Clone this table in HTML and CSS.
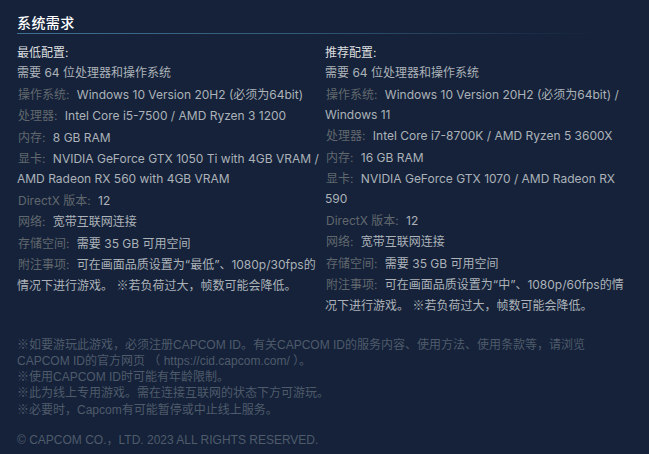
FILE: index.html
```html
<!DOCTYPE html>
<html lang="zh-CN">
<head>
<meta charset="utf-8">
<title>系统需求</title>
<link rel="stylesheet" href="styles.css">
</head>
<body>
<div class="page">
  <h2 class="title">系统需求</h2>
  <div class="cols">
    <ul class="col">
      <li class="head">最低配置:</li>
      <li>需要 64 位处理器和操作系统</li>
      <li><span class="lbl">操作系统:</span> Windows 10 Version 20H2 (必须为64bit)</li>
      <li><span class="lbl">处理器:</span> Intel Core i5-7500 / AMD Ryzen 3 1200</li>
      <li><span class="lbl">内存:</span> 8 GB RAM</li>
      <li><span class="lbl">显卡:</span> NVIDIA GeForce GTX 1050 Ti with 4GB VRAM / AMD Radeon RX 560 with 4GB VRAM</li>
      <li><span class="lbl">DirectX 版本:</span> 12</li>
      <li><span class="lbl">网络:</span> 宽带互联网连接</li>
      <li><span class="lbl">存储空间:</span> 需要 35 GB 可用空间</li>
      <li><span class="lbl">附注事项:</span> 可在画面品质设置为“最低”、1080p/30fps的情况下进行游戏。 <span class="cjk">※</span>若负荷过大，帧数可能会降低。</li>
    </ul>
    <ul class="col">
      <li class="head">推荐配置:</li>
      <li>需要 64 位处理器和操作系统</li>
      <li><span class="lbl">操作系统:</span> Windows 10 Version 20H2 (必须为64bit) / Windows 11</li>
      <li><span class="lbl">处理器:</span> Intel Core i7-8700K / AMD Ryzen 5 3600X</li>
      <li><span class="lbl">内存:</span> 16 GB RAM</li>
      <li><span class="lbl">显卡:</span> NVIDIA GeForce GTX 1070 / AMD Radeon RX 590</li>
      <li><span class="lbl">DirectX 版本:</span> 12</li>
      <li><span class="lbl">网络:</span> 宽带互联网连接</li>
      <li><span class="lbl">存储空间:</span> 需要 35 GB 可用空间</li>
      <li><span class="lbl">附注事项:</span> 可在画面品质设置为“中”、1080p/60fps的情况下进行游戏。 <span class="cjk">※</span>若负荷过大，帧数可能会降低。</li>
    </ul>
  </div>
  <div class="notes">
    <p>※如要游玩此游戏，必须注册CAPCOM ID。有关CAPCOM ID的服务内容、使用方法、使用条款等，请浏览CAPCOM ID的官方网页 （ https://cid.capcom.com/ ）。</p>
    <p>※使用CAPCOM ID时可能有年龄限制。</p>
    <p>※此为线上专用游戏。需在连接互联网的状态下方可游玩。</p>
    <p>※必要时，Capcom有可能暂停或中止线上服务。</p>
  </div>
  <p class="copy">© CAPCOM CO.，LTD. 2023 ALL RIGHTS RESERVED.</p>
</div>
</body>
</html>
```
FILE: styles.css
```css
html, body {
  margin: 0;
  padding: 0;
  background: #15223a;
}

.page {
  width: 616px;
  padding: 12px 17px 0;
}

.title {
  margin: 0;
  padding-bottom: 2px;
  font-family: "Noto Sans CJK SC", sans-serif;
  font-size: 14px;
  line-height: 20px;
  font-weight: 500;
  letter-spacing: 0.03em;
  color: #ffffff;
  background: linear-gradient(to right, #3f7091 0%, #315a7a 45%, rgba(40, 70, 100, 0) 94%) left bottom / 100% 1px no-repeat;
}

.cols {
  margin-top: 9px;
  display: grid;
  grid-template-columns: 308px 308px;
}

.col {
  list-style: none;
  margin: 0;
  padding: 0;
  font-family: "Inter", "Noto Sans CJK SC", sans-serif;
  font-size: 12px;
  line-height: 20px;
  color: #acb2b8;
}

.col li {
  margin-bottom: 1.5px;
}

.col .head {
  color: #dcdedf;
  margin-bottom: 0;
}

.lbl {
  color: #61686d;
  padding-left: 1px;
  margin-right: 4px;
}

.cjk {
  font-family: "Noto Sans CJK SC", sans-serif;
}

.notes {
  margin-top: 19px;
  font-family: "Liberation Sans", "Noto Sans CJK SC", sans-serif;
  font-size: 12px;
  line-height: 16.25px;
  color: #4f5b6a;
}

.notes p {
  margin: 0;
}

.copy {
  margin: 14px 0 0;
  font-family: "Liberation Sans", "Noto Sans CJK SC", sans-serif;
  font-size: 12px;
  line-height: 16px;
  color: #4f5b6a;
}
```
